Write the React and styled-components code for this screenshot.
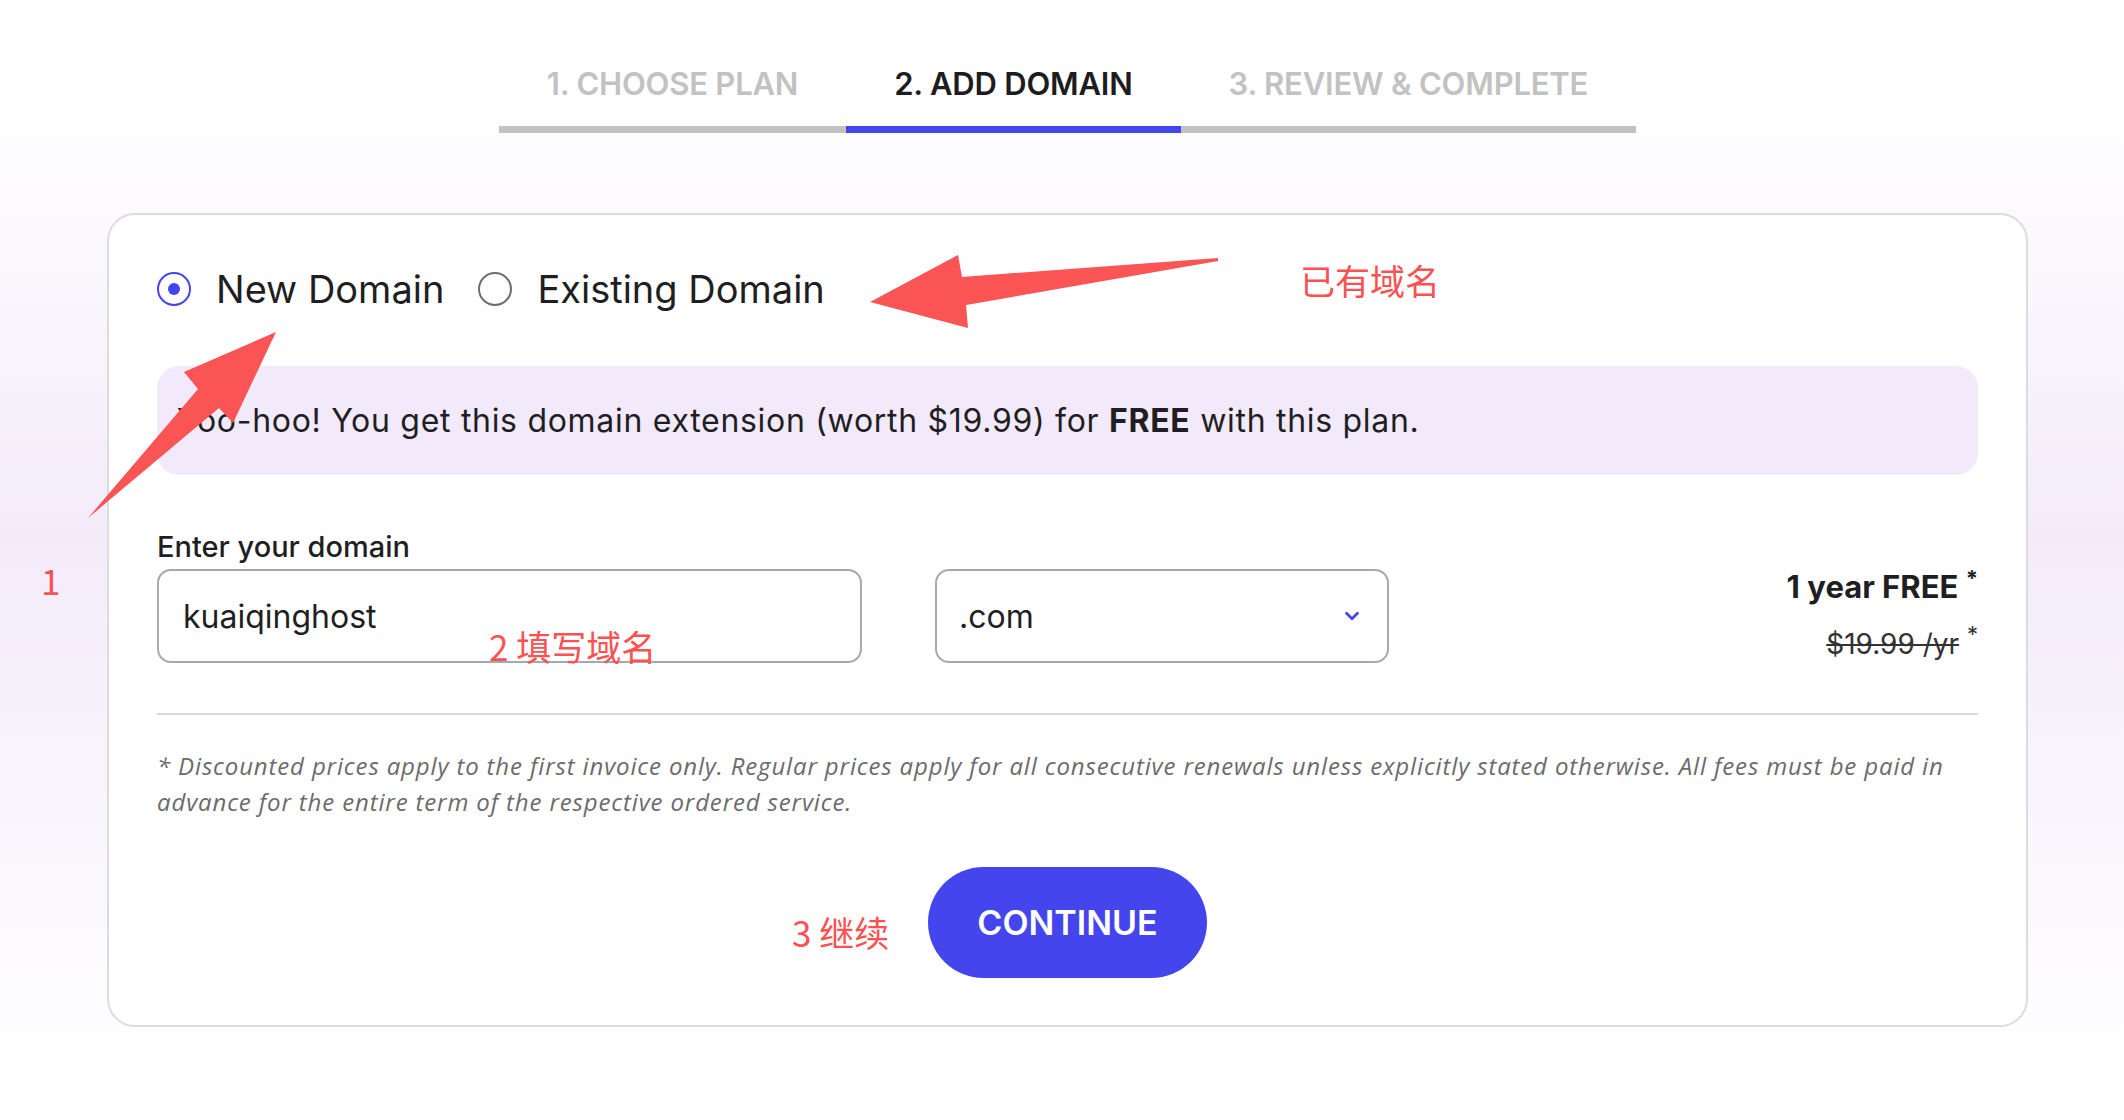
import React, { useState } from 'react'
import styled, { createGlobalStyle } from 'styled-components'
import { ChevronDown } from 'lucide-react'

const GlobalStyle = createGlobalStyle`
  * { box-sizing: border-box; }
  body {
    margin: 0;
    font-family: Inter, 'Noto Sans', 'Noto Sans CJK SC', sans-serif;
    color: #1f1f23;
  }
`

const steps = ['1. CHOOSE PLAN', '2. ADD DOMAIN', '3. REVIEW & COMPLETE']

const App = () => {
  const [type, setType] = useState('new')
  const [domain, setDomain] = useState('kuaiqinghost')

  return (
    <Page>
      <GlobalStyle />
      <Stepper>
        {steps.map((s, i) => (
          <Step key={s} active={i === 1}>
            {s}
          </Step>
        ))}
      </Stepper>

      <Card>
        <RadioRow>
          <RadioLabel onClick={() => setType('new')}>
            <RadioCircle checked={type === 'new'} />
            New Domain
          </RadioLabel>
          <RadioLabel onClick={() => setType('existing')}>
            <RadioCircle checked={type === 'existing'} />
            Existing Domain
          </RadioLabel>
        </RadioRow>

        <Notice>
          <span>
            Yoo-hoo! You get this domain extension (worth $19.99) for{' '}
            <b>FREE</b> with this plan.
          </span>
        </Notice>

        <FieldLabel>Enter your domain</FieldLabel>
        <FieldRow>
          <DomainInput
            value={domain}
            onChange={(e) => setDomain(e.target.value)}
          />
          <Select>
            .com
            <ChevronDown size={22} strokeWidth={3} color='#4545ee' />
          </Select>
          <Price>
            <Free>
              1 year FREE <sup>*</sup>
            </Free>
            <Old>
              <s>$19.99 /yr</s> <sup>*</sup>
            </Old>
          </Price>
        </FieldRow>

        <Divider />

        <Disclaimer>
          * Discounted prices apply to the first invoice only. Regular prices
          apply for all consecutive renewals unless explicitly stated otherwise.
          All fees must be paid in advance for the entire term of the respective
          ordered service.
        </Disclaimer>

        <Actions>
          <ContinueButton>CONTINUE</ContinueButton>
        </Actions>
      </Card>

      {/* red annotations drawn over the screenshot */}
      <Marks viewBox='0 0 2124 1120'>
        <polygon points='870,302 958,255 962,277 1218,258 1218,261 966,305 968,328' />
        <polygon points='276,332 184,372 198,389 88,518 219,408 233,423' />
      </Marks>
      <Note x={41} y={558}>1</Note>
      <Note x={1300} y={258}>已有域名</Note>
      <Note x={489} y={624}>2 填写域名</Note>
      <Note x={792} y={910}>3 继续</Note>
    </Page>
  )
}

export default App

// style
const Page = styled.div`
  position: relative;
  min-height: 1120px;
  padding: 64px 96px 0 107px;
  background: linear-gradient(
    180deg,
    #ffffff 0%,
    #ffffff 9%,
    #f3ebfa 48%,
    #ffffff 96%
  );
`

const Stepper = styled.div`
  display: flex;
  justify-content: center;
`

const Step = styled.div`
  padding: 0 48px 22px;
  font-size: 31px;
  line-height: 40px;
  font-weight: 600;
  letter-spacing: -0.2px;
  color: ${(p) => (p.active ? '#1d1d21' : '#c2c2c2')};
  border-bottom: 7px solid ${(p) => (p.active ? '#4545ee' : '#c2c2c2')};
`

const Card = styled.div`
  margin-top: 80px;
  width: 1921px;
  background: #fff;
  border: 2px solid #dcdcdc;
  border-radius: 28px;
  padding: 51px 48px 47px;
`

const RadioRow = styled.div`
  display: flex;
  align-items: center;
  gap: 34px;
  height: 46px;
`

const RadioLabel = styled.label`
  display: flex;
  align-items: center;
  gap: 25px;
  font-size: 38px;
  cursor: pointer;
`

const RadioCircle = styled.span`
  width: 34px;
  height: 34px;
  border-radius: 50%;
  border: 2px solid ${(p) => (p.checked ? '#4545ee' : '#6e6e6e')};
  display: grid;
  place-items: center;
  &::after {
    content: '';
    width: 12px;
    height: 12px;
    border-radius: 50%;
    background: #4545ee;
    display: ${(p) => (p.checked ? 'block' : 'none')};
  }
`

const Notice = styled.div`
  margin-top: 54px;
  height: 109px;
  display: flex;
  align-items: center;
  padding: 0 20px;
  background: #f2e9fa;
  border-radius: 22px;
  font-size: 32px;
  letter-spacing: 0.7px;
  b {
    font-weight: 700;
  }
`

const FieldLabel = styled.div`
  margin-top: 55px;
  font-size: 29px;
  font-weight: 500;
  line-height: 34px;
`

const FieldRow = styled.div`
  display: flex;
  align-items: flex-start;
  margin-top: 5px;
`

const box = `
  height: 94px;
  border: 2px solid #a9a9a9;
  border-radius: 14px;
  background: #fff;
  font-size: 32px;
  color: #1f1f23;
`

const DomainInput = styled.input`
  ${box}
  width: 705px;
  padding: 0 24px;
  font-family: inherit;
  outline: none;
`

const Select = styled.div`
  ${box}
  width: 454px;
  margin-left: 73px;
  padding: 0 24px 0 22px;
  display: flex;
  align-items: center;
  justify-content: space-between;
`

const Price = styled.div`
  margin-left: auto;
  text-align: right;
  sup {
    font-size: 22px;
    vertical-align: 12px;
    line-height: 0;
  }
`

const Free = styled.div`
  font-size: 31px;
  font-weight: 700;
  line-height: 40px;
  margin-top: -2px;
`

const Old = styled.div`
  font-size: 28px;
  color: #333;
  line-height: 40px;
  margin-top: 17px;
  s {
    text-decoration-thickness: 2px;
  }
`

const Divider = styled.hr`
  margin: 49px 0 0;
  border: none;
  border-top: 2px solid #dadada;
`

const Disclaimer = styled.p`
  margin: 33px 0 0;
  font-family: 'Open Sans', sans-serif;
  font-style: italic;
  font-size: 24px;
  letter-spacing: 0.85px;
  line-height: 36px;
  color: #6b6b6b;
`

const Actions = styled.div`
  display: flex;
  justify-content: center;
  margin-top: 47px;
`

const ContinueButton = styled.button`
  width: 279px;
  height: 111px;
  border: none;
  border-radius: 56px;
  background: #4545ee;
  color: #fff;
  font-family: inherit;
  font-size: 34px;
  font-weight: 600;
  cursor: pointer;
`

const Marks = styled.svg`
  position: absolute;
  top: 0;
  left: 0;
  width: 2124px;
  height: 1120px;
  pointer-events: none;
  polygon {
    fill: #fa5454;
  }
`

const Note = styled.span`
  position: absolute;
  left: ${(p) => p.x}px;
  top: ${(p) => p.y}px;
  font-family: 'Noto Sans CJK SC', sans-serif;
  font-size: 35px;
  line-height: 44px;
  color: #fa5252;
`
